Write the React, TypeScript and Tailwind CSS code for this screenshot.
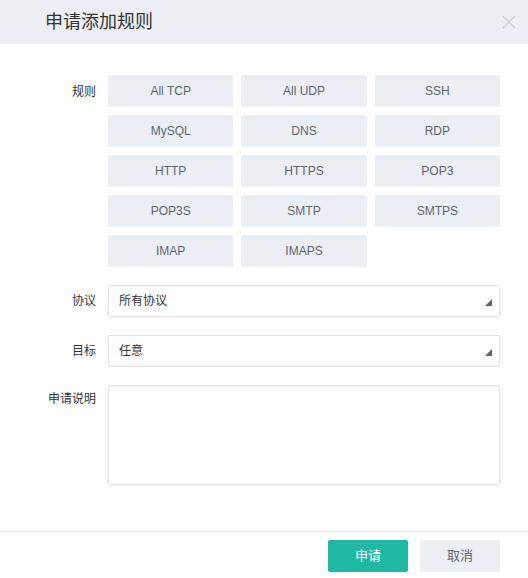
import * as React from "react"

const rules = [
  "All TCP", "All UDP", "SSH",
  "MySQL", "DNS", "RDP",
  "HTTP", "HTTPS", "POP3",
  "POP3S", "SMTP", "SMTPS",
  "IMAP", "IMAPS",
]

function Arrow() {
  return (
    <svg width="7" height="7" viewBox="0 0 7 7" className="absolute right-[7px] top-[13px]">
      <polygon points="7,0 7,7 0,7" fill="#666" />
    </svg>
  )
}

function Select({ value }: { value: string }) {
  return (
    <div className="relative h-8 w-[392px] rounded-[2px] border border-[#dfe2e6] bg-white pl-[10px] text-[12px] leading-[30px] text-[#333]">
      {value}
      <Arrow />
    </div>
  )
}

export default function App() {
  return (
    <div
      className="flex h-[578px] w-[528px] flex-col bg-white"
      style={{ fontFamily: '"Liberation Sans", "Noto Sans CJK SC", sans-serif' }}
    >
      <div className="relative flex h-[44px] items-center bg-[#ebeef2] pl-[45px] text-[18px] text-[#333]">
        申请添加规则
        <svg width="14" height="14" viewBox="0 0 14 14" className="absolute right-[12px] top-[15px]">
          <path d="M1 1L13 13M13 1L1 13" stroke="#ccc" strokeWidth="1.2" />
        </svg>
      </div>

      <div className="flex flex-1 flex-col gap-[18px] pt-[31px] text-[12px]">
        <div className="flex gap-3">
          <div className="w-[96px] pt-[8px] text-right text-[#333]">规则</div>
          <div className="grid w-[392px] grid-cols-3 gap-2">
            {rules.map((r) => (
              <div
                key={r}
                className="flex h-8 items-center justify-center rounded-[2px] bg-[#ebeef2] text-[12px] text-[#5e6670]"
              >
                {r}
              </div>
            ))}
          </div>
        </div>

        <div className="flex items-center gap-3">
          <div className="w-[96px] text-right text-[#333]">协议</div>
          <Select value="所有协议" />
        </div>

        <div className="flex items-center gap-3">
          <div className="w-[96px] text-right text-[#333]">目标</div>
          <Select value="任意" />
        </div>

        <div className="flex gap-3">
          <div className="w-[96px] pt-[5px] text-right text-[#333]">申请说明</div>
          <div className="h-[100px] w-[392px] rounded-[2px] border border-[#dfe2e6] bg-white" />
        </div>
      </div>

      <div className="flex h-[47px] items-start justify-end gap-3 border-t border-[#e6e9ed] pr-[28px] pt-[8px] text-[13px]">
        <div className="flex h-8 w-20 items-center justify-center rounded-[2px] bg-[#1fb9a3] text-white">申请</div>
        <div className="flex h-8 w-20 items-center justify-center rounded-[2px] bg-[#ebeef2] text-[#5e6670]">取消</div>
      </div>
    </div>
  )
}
